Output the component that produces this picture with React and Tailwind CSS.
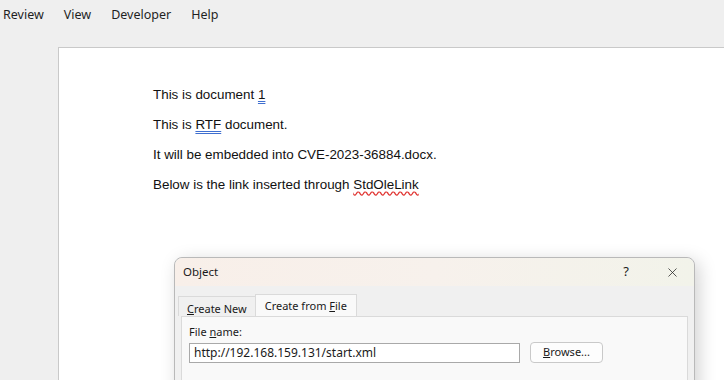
import { X } from "lucide-react";

const menus = ["Review", "View", "Developer", "Help"];

const lines = [
  <>This is document <span className="underline decoration-double decoration-[#3f6fd0] underline-offset-2">1</span></>,
  <>This is <span className="underline decoration-double decoration-[#3f6fd0] underline-offset-2">RTF</span> document.</>,
  <>It will be embedded into CVE-2023-36884.docx.</>,
  <>Below is the link inserted through <span className="underline decoration-wavy decoration-[#e0322f] underline-offset-2">StdOleLink</span></>,
];

const App = () => {
  return (
    <div className="w-[724px] h-[380px] overflow-hidden bg-[#efefef] flex flex-col font-['Noto_Sans',sans-serif]">
      <div className="h-[47px] flex items-start pt-[6px] pl-[3px] gap-[20px] text-[12.5px] text-[#1f1f1f]">
        {menus.map((m) => (
          <span key={m}>{m}</span>
        ))}
      </div>

      <div className="flex-1 ml-[58px] bg-white border-l border-t border-[#c9c9c9] relative">
        <div className="pl-[94px] pt-[37px] flex flex-col gap-[11px] text-[13.4px] leading-[19px] text-[#111] font-['Liberation_Sans',sans-serif]">
          {lines.map((l, i) => (
            <p key={i}>{l}</p>
          ))}
        </div>

        {/* Object dialog */}
        <div className="absolute left-[115px] top-[209px] w-[521px] h-[140px] rounded-t-[8px] border border-[#b9b9b9] bg-[#f0f0f0] shadow-[4px_4px_18px_rgba(0,0,0,0.18)] flex flex-col text-[11px] text-[#1a1a1a] font-['Noto_Sans',sans-serif]">
          <div className="h-[28px] rounded-t-[8px] bg-gradient-to-r from-[#f8efe9] via-[#f7f1ec] to-[#f2f3ea] flex items-center pl-[8px] pr-[14px]">
            <span className="text-[11.5px]">Object</span>
            <span className="ml-auto mr-[36px] text-[13px]">?</span>
            <X size={15} strokeWidth={1.2} className="text-[#222]" />
          </div>
          <div className="flex pl-[3px] pt-[8px]">
            <div className="px-[8px] pt-[4px] h-[20px] mt-[2px] border border-b-0 border-[#dadada] bg-[#f0f0f0]">
              <span className="underline underline-offset-1">C</span>reate New
            </div>
            <div className="px-[9px] pt-[3px] h-[22px] border border-b-0 border-[#dadada] bg-[#f9f9f9] -ml-px">
              Create from <span className="underline underline-offset-1">F</span>ile
            </div>
          </div>
          <div className="flex-1 ml-[6px] mr-[6px] border border-b-0 border-[#dadada] bg-[#f9f9f9] px-[7px] pt-[7px]">
            <div className="leading-[15px]">
              File <span className="underline underline-offset-1">n</span>ame:
            </div>
            <div className="flex items-center mt-[3px] gap-[10px]">
              <div className="w-[331px] h-[20px] border border-[#a9a9a9] bg-white px-[4px] flex items-center text-[12px]">
                http://192.168.159.131/start.xml
              </div>
              <div className="w-[73px] h-[21px] rounded-[4px] border border-[#c9c9c9] bg-[#fdfdfd] flex items-center justify-center">
                <span className="underline underline-offset-1">B</span>rowse...
              </div>
            </div>
          </div>
        </div>
      </div>
    </div>
  );
};

export default App;
